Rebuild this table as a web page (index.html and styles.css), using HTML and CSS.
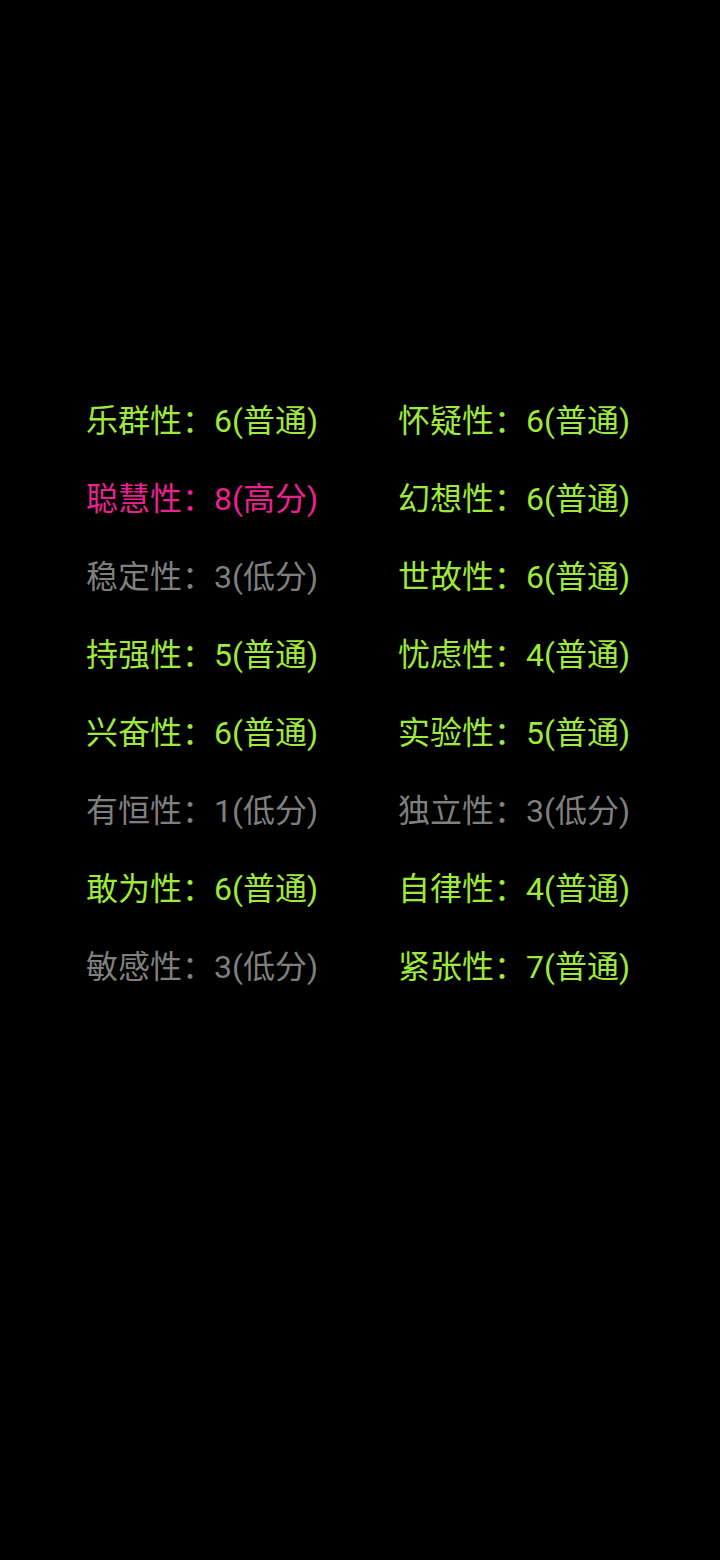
FILE: index.html
```html
<!DOCTYPE html>
<html lang="zh">
<head>
<meta charset="utf-8">
<link rel="stylesheet" href="styles.css">
</head>
<body>
<div class="grid">
  <div class="item mid">乐群性：6(普通)</div>
  <div class="item mid">怀疑性：6(普通)</div>
  <div class="item high">聪慧性：8(高分)</div>
  <div class="item mid">幻想性：6(普通)</div>
  <div class="item low">稳定性：3(低分)</div>
  <div class="item mid">世故性：6(普通)</div>
  <div class="item mid">持强性：5(普通)</div>
  <div class="item mid">忧虑性：4(普通)</div>
  <div class="item mid">兴奋性：6(普通)</div>
  <div class="item mid">实验性：5(普通)</div>
  <div class="item low">有恒性：1(低分)</div>
  <div class="item low">独立性：3(低分)</div>
  <div class="item mid">敢为性：6(普通)</div>
  <div class="item mid">自律性：4(普通)</div>
  <div class="item low">敏感性：3(低分)</div>
  <div class="item mid">紧张性：7(普通)</div>
</div>
</body>
</html>
```
FILE: styles.css
```css
html, body {
  margin: 0;
  padding: 0;
  background: #000;
  width: 720px;
  height: 1560px;
  overflow: hidden;
}
.grid {
  display: grid;
  grid-template-columns: 312px 312px;
  grid-auto-rows: 78px;
  padding: 382px 0 0 86px;
}
.item {
  font-family: "Roboto", "Noto Sans CJK SC", sans-serif;
  font-size: 32px;
  line-height: 78px;
  white-space: nowrap;
}
.mid { color: #9fe83c; }
.high { color: #ea2190; }
.low { color: #7f7f7f; }
```
